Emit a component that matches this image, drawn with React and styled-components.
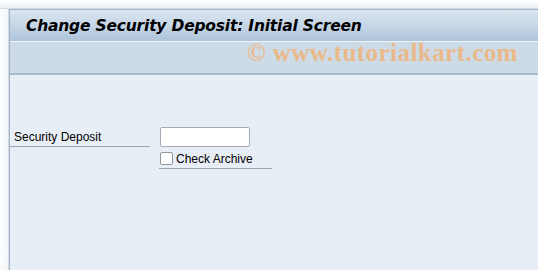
import React from "react";
import styled, { createGlobalStyle } from "styled-components";

const GlobalStyle = createGlobalStyle`
  html, body {
    margin: 0;
    padding: 0;
    background: #ffffff;
    font-family: "Liberation Sans", Arial, sans-serif;
  }
`;

const Screen = styled.div`
  width: 538px;
  height: 270px;
  display: flex;
  flex-direction: column;
  overflow: hidden;
`;

const TopStrip = styled.div`
  height: 8px;
  background: linear-gradient(to bottom, #ffffff, #edf1f5);
  border-bottom: 1px solid #d4dce6;
`;

const Frame = styled.div`
  flex: 1;
  display: flex;
`;

const Gutter = styled.div`
  width: 8px;
  background: linear-gradient(to right, #fbfcfd, #f2f5f8);
  border-right: 1px solid #d2dbe5;
`;

const Main = styled.div`
  flex: 1;
  display: flex;
  flex-direction: column;
  border-left: 1px solid #a4b4c4;
`;

const TitleBar = styled.div`
  height: 31px;
  display: flex;
  align-items: center;
  padding-left: 16px;
  background: linear-gradient(to bottom, #dae5ef 0%, #c6d6e6 50%, #adc4da 100%);
  border-top: 1px solid #a4b4c4;
`;

const Title = styled.h1`
  margin: 0;
  font-family: "DejaVu Sans", Verdana, sans-serif;
  font-size: 15.5px;
  font-weight: bold;
  font-style: italic;
  letter-spacing: -0.2px;
  color: #000000;
`;

const Toolbar = styled.div`
  position: relative;
  height: 31px;
  background: #cddbe7;
  border-top: 1px solid #eef3f8;
  border-bottom: 2px solid #a9b9c8;
`;

const Watermark = styled.span`
  position: absolute;
  left: 237px;
  top: -3px;
  font-family: "Liberation Serif", "Times New Roman", serif;
  font-size: 25px;
  font-weight: bold;
  letter-spacing: 0.45px;
  color: #eab98a;
  white-space: nowrap;
`;

const Content = styled.div`
  flex: 1;
  background: #e8eef6;
  padding: 52px 0 0 0;
`;

const Form = styled.div`
  display: grid;
  grid-template-columns: 140px auto;
  column-gap: 9px;
  row-gap: 2px;
  align-items: end;
`;

const Label = styled.label`
  height: 19px;
  display: flex;
  align-items: flex-end;
  padding: 0 0 2px 4px;
  box-sizing: border-box;
  font-size: 12px;
  color: #000000;
  border-bottom: 1px solid #9ea8b4;
`;

const Input = styled.input`
  width: 90px;
  height: 20px;
  margin: 0 0 0 1px;
  box-sizing: border-box;
  border: 1px solid #a3acb6;
  border-radius: 2px;
  background: #ffffff;
  outline: none;
`;

const CheckCell = styled.div`
  width: 113px;
  height: 20px;
  display: flex;
  align-items: center;
  gap: 3px;
  border-bottom: 1px solid #9ea8b4;
  box-sizing: border-box;
  padding-left: 1px;
`;

const Box = styled.span`
  width: 13px;
  height: 13px;
  box-sizing: border-box;
  border: 1px solid #8c96a0;
  border-radius: 2px;
  background: #ffffff;
`;

const CheckText = styled.span`
  font-size: 12px;
  color: #000000;
`;

export default function App() {
  return (
    <>
      <GlobalStyle />
      <Screen>
        <TopStrip />
        <Frame>
          <Gutter />
          <Main>
            <TitleBar>
              <Title>Change Security Deposit: Initial Screen</Title>
            </TitleBar>
            <Toolbar>
              <Watermark>© www.tutorialkart.com</Watermark>
            </Toolbar>
            <Content>
              <Form>
                <Label>Security Deposit</Label>
                <Input type="text" />
                <span />
                <CheckCell>
                  <Box />
                  <CheckText>Check Archive</CheckText>
                </CheckCell>
              </Form>
            </Content>
          </Main>
        </Frame>
      </Screen>
    </>
  );
}
